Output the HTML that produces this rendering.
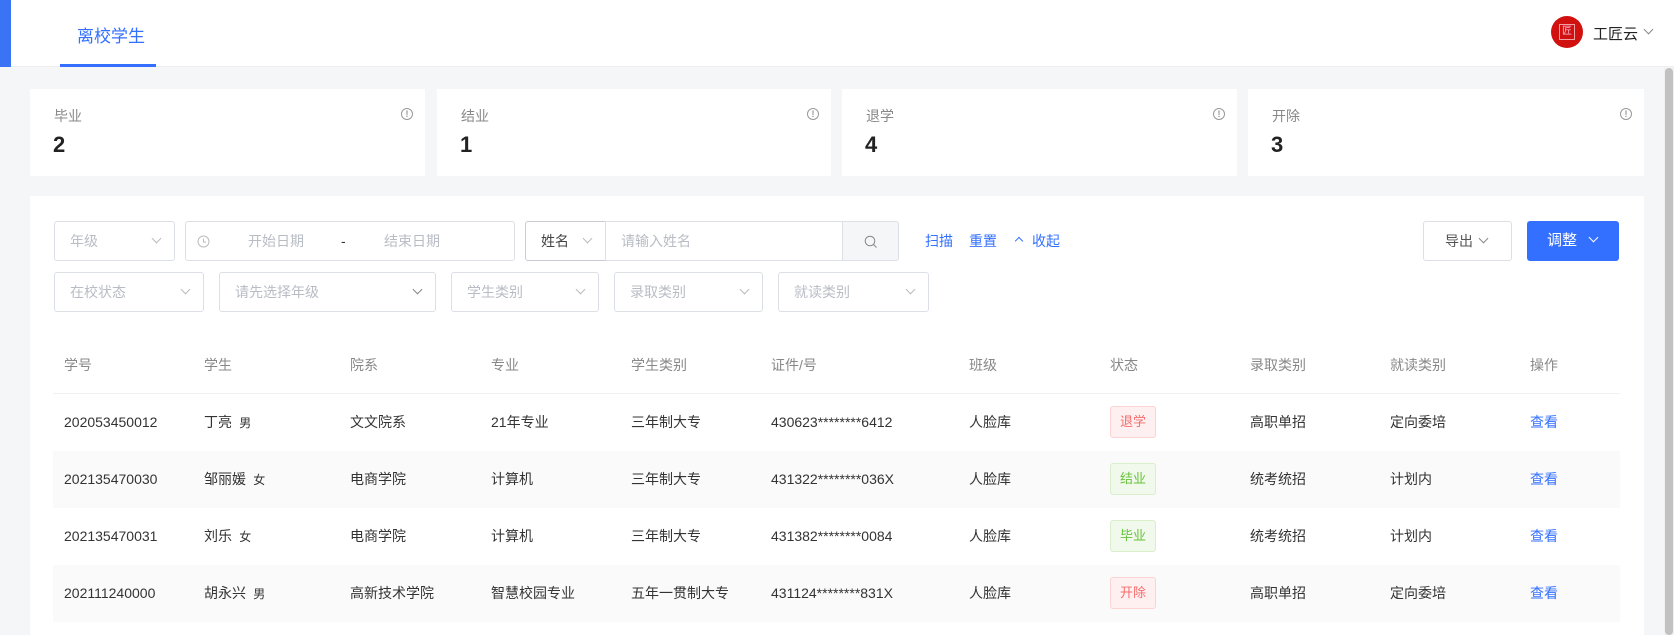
<!DOCTYPE html>
<html><head><meta charset="utf-8"><style>
*{margin:0;padding:0;box-sizing:border-box}
html,body{width:1674px;height:635px;overflow:hidden}
body{background:#f5f6f8;font-family:"Liberation Sans","Noto Sans CJK SC",sans-serif;font-size:14px;color:#333;position:relative}
.a{position:absolute}
.hdr{left:0;top:0;width:1674px;height:67px;background:#fff;border-bottom:1px solid #eceef2}
.card{top:89px;height:87px;background:#fff}
.card .l{position:absolute;left:24px;top:17px;color:#888;font-size:14px}
.card .n{position:absolute;left:23px;top:43px;font-size:22px;font-weight:bold;color:#222}
.card .i{position:absolute;right:12px;top:19px;width:12px;height:12px;border:1px solid #999;border-radius:50%;font-size:9px;line-height:10px;text-align:center;color:#999;font-weight:bold}
.box{border:1px solid #dcdfe6;border-radius:3px;background:#fff;color:#b8bcc4;height:40px;line-height:38px;padding-left:15px;font-size:14px}
.chev{position:absolute;right:14px;top:13px;width:7px;height:7px;border-right:1px solid #bbb;border-bottom:1px solid #bbb;transform:rotate(45deg)}
.th{top:337px;height:56px;line-height:56px;color:#888}
.row{left:53px;width:1567px;height:57px}
.c{position:absolute;line-height:57px;white-space:nowrap}
.tag{position:absolute;left:1057px;top:12px;width:46px;height:32px;border-radius:3px;text-align:center;line-height:30px;font-size:13px;border:1px solid}
.red{color:#f56c6c;background:#fef0f0;border-color:#fbd3d3}
.grn{color:#67c23a;background:#f0f9eb;border-color:#d9efcb}
.lk{color:#3370ff}
</style></head><body>
<div class="a hdr"></div>
<div class="a" style="left:0;top:0;width:11px;height:67px;background:#3a74f5"></div>
<div class="a" style="left:77px;top:22px;font-size:17px;color:#3370ff">离校学生</div>
<div class="a" style="left:60px;top:64px;width:96px;height:3px;background:#3370ff"></div>
<div class="a" style="left:1551px;top:16px;width:32px;height:32px;border-radius:50%;background:#d0110f"></div>
<div class="a" style="left:1559px;top:24px;width:16px;height:16px;border:1px solid #f0a0a0;color:#fbd;font-size:10px;line-height:14px;text-align:center">匠</div>
<div class="a" style="left:1593px;top:23px;font-size:15px;color:#222">工匠云</div>
<div class="a" style="left:1645px;top:26px;width:7px;height:7px;border-right:1px solid #888;border-bottom:1px solid #888;transform:rotate(45deg)"></div>
<div class="a" style="left:1664px;top:68px;width:10px;height:567px;background:#f1f1f1"></div>
<div class="a" style="left:1665px;top:68px;width:8px;height:567px;background:#c1c1c1;border-radius:4px"></div>

<div class="a card" style="left:30px;width:395px"><span class="l">毕业</span><span class="n">2</span><span class="i">!</span></div>
<div class="a card" style="left:437px;width:394px"><span class="l">结业</span><span class="n">1</span><span class="i">!</span></div>
<div class="a card" style="left:842px;width:395px"><span class="l">退学</span><span class="n">4</span><span class="i">!</span></div>
<div class="a card" style="left:1248px;width:396px"><span class="l">开除</span><span class="n">3</span><span class="i">!</span></div>

<div class="a" style="left:30px;top:196px;width:1614px;height:439px;background:#fff;overflow:hidden">
</div>

<div class="a box" style="left:54px;top:221px;width:121px">年级<span class="chev"></span></div>
<div class="a box" style="left:185px;top:221px;width:330px"><svg style="position:absolute;left:11px;top:13px" width="13" height="13" viewBox="0 0 13 13"><circle cx="6.5" cy="6.5" r="5.5" fill="none" stroke="#bbb"/><path d="M6.5 3.5V7H9" fill="none" stroke="#bbb"/></svg><span style="position:absolute;left:62px">开始日期</span><span style="position:absolute;left:155px;color:#333">-</span><span style="position:absolute;left:198px">结束日期</span></div>
<div class="a box" style="left:525px;top:221px;width:81px;color:#444;border-radius:3px 0 0 3px;border-color:#c8cbd2">姓名<span class="chev"></span></div>
<div class="a box" style="left:605px;top:221px;width:238px;border-radius:0">请输入姓名</div>
<div class="a box" style="left:842px;top:221px;width:57px;background:#f5f6f8;border-radius:0 3px 3px 0"><svg style="position:absolute;left:21px;top:13px" width="14" height="14" viewBox="0 0 14 14"><circle cx="6" cy="6" r="4.8" fill="none" stroke="#888"/><path d="M9.5 9.5L12.5 12.5" stroke="#888"/></svg></div>
<div class="a lk" style="left:925px;top:231px">扫描</div>
<div class="a lk" style="left:969px;top:231px">重置</div>
<div class="a" style="left:1016px;top:238px;width:6px;height:6px;border-left:1px solid #3370ff;border-top:1px solid #3370ff;transform:rotate(45deg)"></div>
<div class="a lk" style="left:1032px;top:231px">收起</div>
<div class="a box" style="left:1423px;top:221px;width:89px;color:#555;padding-left:21px">导出<span class="chev" style="right:24px;border-color:#888"></span></div>
<div class="a" style="left:1527px;top:221px;width:92px;height:40px;background:#3370ff;border-radius:3px;color:#fff;font-size:15px;line-height:40px;padding-left:20px">调整<span class="chev" style="right:22px;top:13px;border-color:#fff"></span></div>

<div class="a box" style="left:54px;top:272px;width:150px">在校状态<span class="chev"></span></div>
<div class="a box" style="left:219px;top:272px;width:217px">请先选择年级<span class="chev" style="border-color:#888"></span></div>
<div class="a box" style="left:451px;top:272px;width:148px">学生类别<span class="chev"></span></div>
<div class="a box" style="left:614px;top:272px;width:149px">录取类别<span class="chev"></span></div>
<div class="a box" style="left:778px;top:272px;width:151px">就读类别<span class="chev"></span></div>

<div class="a row th" style="border-bottom:1px solid #f0f0f0">
<span class="c" style="left:11px">学号</span><span class="c" style="left:151px">学生</span><span class="c" style="left:297px">院系</span><span class="c" style="left:438px">专业</span><span class="c" style="left:578px">学生类别</span><span class="c" style="left:718px">证件/号</span><span class="c" style="left:916px">班级</span><span class="c" style="left:1057px">状态</span><span class="c" style="left:1197px">录取类别</span><span class="c" style="left:1337px">就读类别</span><span class="c" style="left:1477px">操作</span></div>

<div class="a row" style="top:394px">
<span class="c" style="left:11px">202053450012</span><span class="c" style="left:151px">丁亮 <small style="font-size:12px">&nbsp;男</small></span><span class="c" style="left:297px">文文院系</span><span class="c" style="left:438px">21年专业</span><span class="c" style="left:578px">三年制大专</span><span class="c" style="left:718px">430623********6412</span><span class="c" style="left:916px">人脸库</span><span class="tag red">退学</span><span class="c" style="left:1197px">高职单招</span><span class="c" style="left:1337px">定向委培</span><span class="c lk" style="left:1477px">查看</span></div>
<div class="a row" style="top:451px;background:#fafafa">
<span class="c" style="left:11px">202135470030</span><span class="c" style="left:151px">邹丽媛 <small style="font-size:12px">&nbsp;女</small></span><span class="c" style="left:297px">电商学院</span><span class="c" style="left:438px">计算机</span><span class="c" style="left:578px">三年制大专</span><span class="c" style="left:718px">431322********036X</span><span class="c" style="left:916px">人脸库</span><span class="tag grn">结业</span><span class="c" style="left:1197px">统考统招</span><span class="c" style="left:1337px">计划内</span><span class="c lk" style="left:1477px">查看</span></div>
<div class="a row" style="top:508px">
<span class="c" style="left:11px">202135470031</span><span class="c" style="left:151px">刘乐 <small style="font-size:12px">&nbsp;女</small></span><span class="c" style="left:297px">电商学院</span><span class="c" style="left:438px">计算机</span><span class="c" style="left:578px">三年制大专</span><span class="c" style="left:718px">431382********0084</span><span class="c" style="left:916px">人脸库</span><span class="tag grn">毕业</span><span class="c" style="left:1197px">统考统招</span><span class="c" style="left:1337px">计划内</span><span class="c lk" style="left:1477px">查看</span></div>
<div class="a row" style="top:565px;background:#fafafa">
<span class="c" style="left:11px">202111240000</span><span class="c" style="left:151px">胡永兴 <small style="font-size:12px">&nbsp;男</small></span><span class="c" style="left:297px">高新技术学院</span><span class="c" style="left:438px">智慧校园专业</span><span class="c" style="left:578px">五年一贯制大专</span><span class="c" style="left:718px">431124********831X</span><span class="c" style="left:916px">人脸库</span><span class="tag red">开除</span><span class="c" style="left:1197px">高职单招</span><span class="c" style="left:1337px">定向委培</span><span class="c lk" style="left:1477px">查看</span></div>
</body></html>
